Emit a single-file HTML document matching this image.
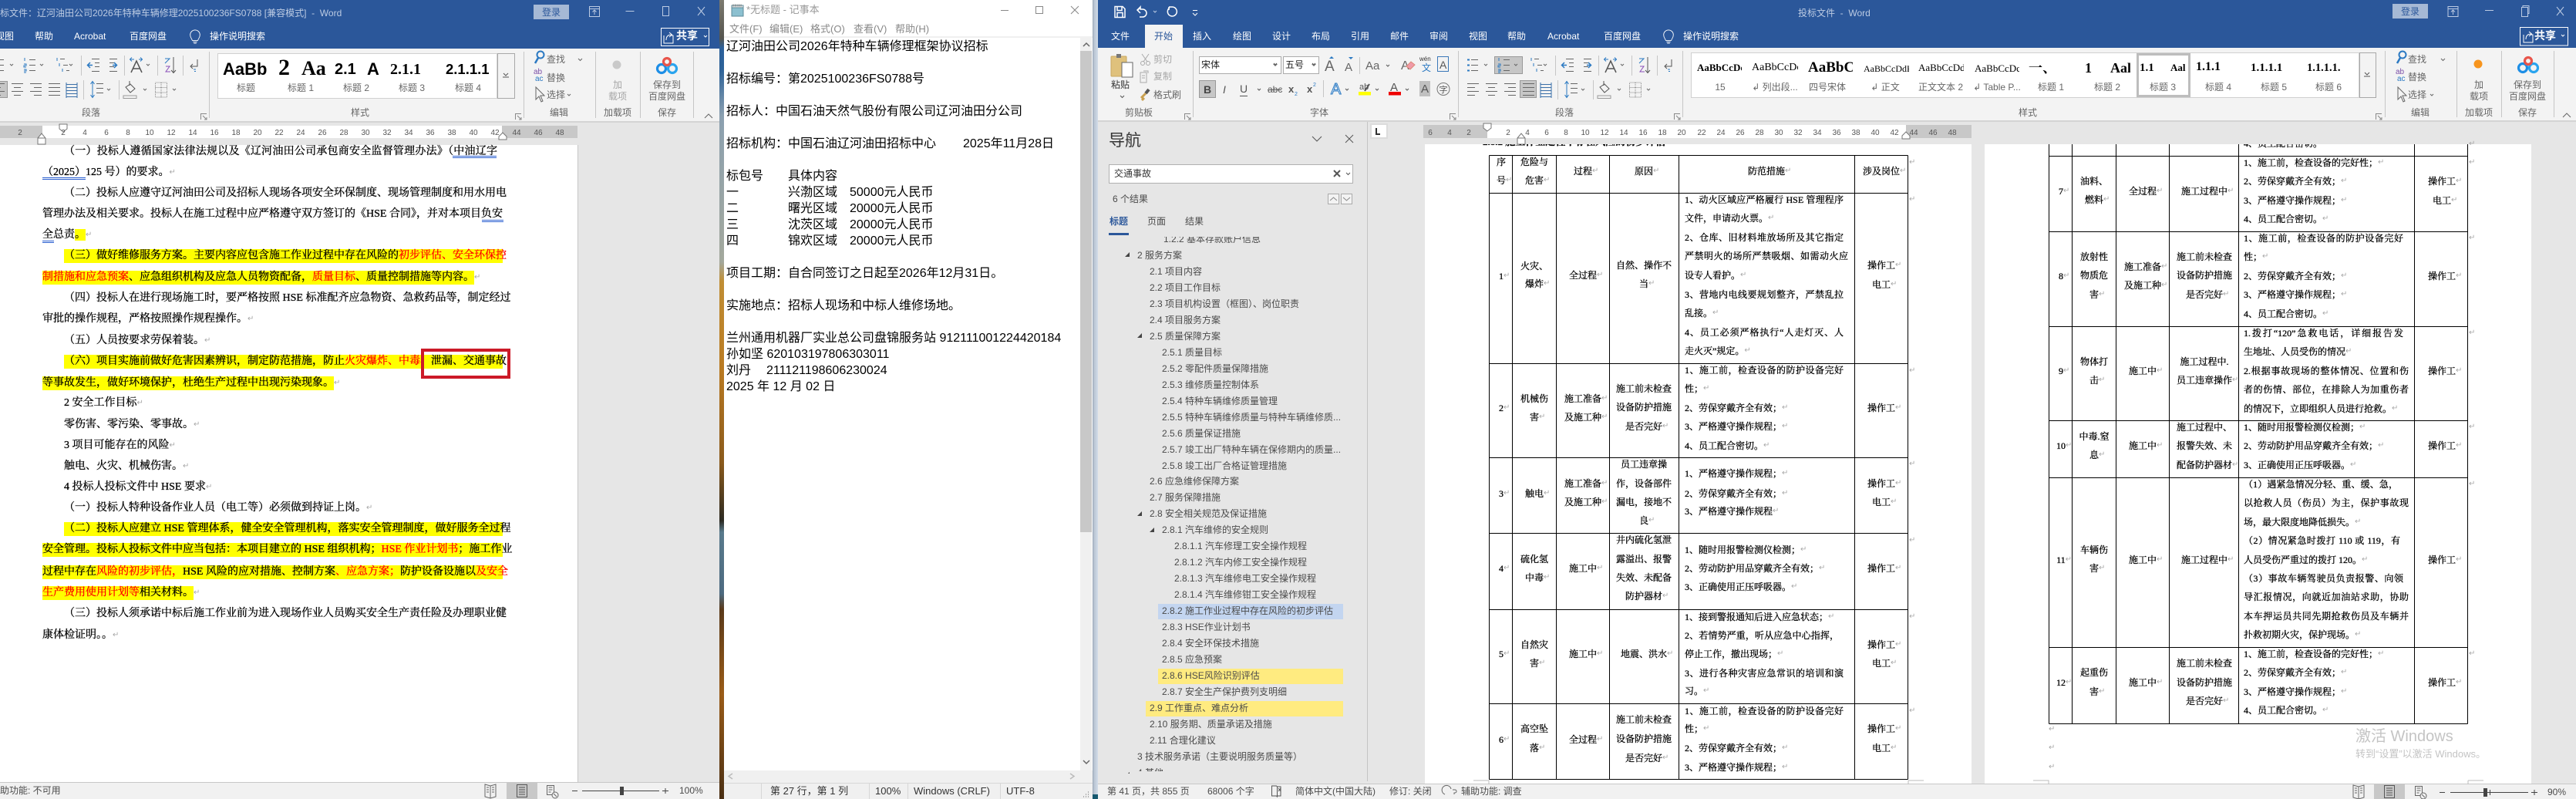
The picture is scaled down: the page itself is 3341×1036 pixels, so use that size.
<!DOCTYPE html>
<html lang="zh-CN"><head><meta charset="utf-8"><title>Word</title>
<style>
html,body{margin:0;padding:0;width:3341px;height:1036px;overflow:hidden;background:#e6e6e6}
body{position:relative;font-family:"Liberation Sans","Noto Sans CJK SC",sans-serif;font-size:12px;color:#444}
.b{position:absolute}
.t{position:absolute;white-space:pre;line-height:18px;height:18px}
.c{transform:translateX(-50%)}
.w{color:#fff}
.ti{color:#bccbe3}
.g{color:#666}
.lg{color:#a6a6a6}
.n{color:#4a4a4a}
.k{overflow:hidden}
.s{font-family:"Liberation Serif","Noto Serif CJK SC",serif;color:#000}
.sb{font-weight:bold}
.l{position:absolute;white-space:nowrap;line-height:18px;height:18px;font-size:14px;font-family:"Liberation Serif","Noto Serif CJK SC",serif;color:#000;-webkit-text-stroke:.3px}
.j{text-align:justify;text-align-last:justify}
.y{background:#ff0}
.r{color:#f00}
i{position:absolute;font-style:normal;font-family:"DejaVu Sans",sans-serif;color:#a8a8a8;font-size:10px;line-height:18px;-webkit-text-stroke:0}
.a{position:absolute;white-space:nowrap;line-height:18px;height:18px;font-size:12px;font-family:"Liberation Serif","Noto Serif CJK SC",serif;color:#000;-webkit-text-stroke:.3px}
.np{position:absolute;white-space:pre;line-height:21px;height:21px;font-size:16px;color:#000}
.ns{position:absolute;white-space:pre;line-height:18px;height:18px;font-size:13px;color:#333}
svg text{font-family:"Liberation Sans","Noto Sans CJK SC",sans-serif}
</style></head><body>

<!-- wallpaper strips -->
<div class="b" style="left:933px;top:0;width:6px;height:1036px;background:linear-gradient(#7c7a70 0,#55554f 50px,#2b5f9a 62px,#2d6298 90px,#8ba0b0 150px,#a3a89c 340px,#c08e34 365px,#b97a22 480px,#8a5a1c 600px,#2c2a22 675px,#597a8c 690px,#4d6a80 770px,#5a3a1a 790px,#9a5c18 900px,#4a2f14 1036px)"></div>
<div class="b" style="left:1417px;top:0;width:7px;height:1036px;background:linear-gradient(90deg,#9aa7b6 0,#b9c5d3 2px,#d2dce8 7px)"></div>
<div class="b" style="left:1417px;top:1030px;width:7px;height:6px;background:#16586f"></div>

<!-- LEFT WORD -->
<div class="b" style="left:0;top:0;width:933px;height:63px;background:#2b579a"></div>
<div class="b" style="left:0;top:63px;width:933px;height:94px;background:#f3f3f3"></div>
<div class="b" style="left:0;top:157px;width:933px;height:2px;background:#d4d4d4"></div>
<div class="b" style="left:0;top:159px;width:933px;height:29px;background:#e6e6e6"></div>
<div class="b" style="left:0;top:163px;width:55px;height:16px;background:#c8c8c8"></div>
<div class="b" style="left:55px;top:163px;width:596px;height:16px;background:#fff"></div>
<div class="b" style="left:651px;top:163px;width:98px;height:16px;background:#c8c8c8"></div>
<div class="b" style="left:0;top:188px;width:749px;height:826px;background:#fff"></div>
<div class="b" style="left:749px;top:188px;width:184px;height:826px;background:#e6e6e6;border-left:1px solid #c6c6c6;box-sizing:border-box"></div>
<div class="b" style="left:0;top:1014px;width:933px;height:22px;background:#f1f1f1;border-top:1px solid #c8c8c8;box-sizing:border-box"></div>
<div class="b" style="left:657px;top:1015px;width:40px;height:21px;background:#c8c8c8"></div>
<div class="b" style="left:692px;top:6px;width:46px;height:19px;background:#a6b9d5"></div>
<div class="b" style="left:0;top:105px;width:10px;height:22px;background:#c6c6c6;border:1px solid #999;border-left:0;box-sizing:border-box"></div>
<div class="b" style="left:282px;top:69px;width:363px;height:59px;background:#fff;border:1px solid #d0d0d0;box-sizing:border-box"></div>
<div class="b" style="left:645px;top:69px;width:23px;height:59px;background:#f3f3f3;border:1px solid #a8a8a8;box-sizing:border-box"></div>

<!-- NOTEPAD -->
<div class="b" style="left:939px;top:0;width:478px;height:1036px;background:#fff"></div>
<div class="b" style="left:939px;top:47px;width:478px;height:2px;background:#f0f0f0"></div>
<div class="b" style="left:1401px;top:49px;width:15px;height:950px;background:#f0f0f0"></div>
<div class="b" style="left:1401px;top:66px;width:15px;height:624px;background:#c8c8c8"></div>
<div class="b" style="left:939px;top:999px;width:478px;height:37px;background:#f0f0f0"></div>
<div class="b" style="left:939px;top:1015px;width:478px;height:1px;background:#d7d7d7"></div>
<div class="b" style="left:987px;top:1016px;width:1px;height:20px;background:#d7d7d7"></div>
<div class="b" style="left:1127px;top:1016px;width:1px;height:20px;background:#d7d7d7"></div>
<div class="b" style="left:1177px;top:1016px;width:1px;height:20px;background:#d7d7d7"></div>
<div class="b" style="left:1297px;top:1016px;width:1px;height:20px;background:#d7d7d7"></div>

<!-- RIGHT WORD -->
<div class="b" style="left:1424px;top:0;width:1917px;height:62px;background:#2b579a"></div>
<div class="b" style="left:1485px;top:32px;width:49px;height:30px;background:#f3f3f3"></div>
<div class="b" style="left:1424px;top:62px;width:1917px;height:94px;background:#f3f3f3"></div>
<div class="b" style="left:1424px;top:156px;width:1917px;height:2px;background:#d4d4d4"></div>
<div class="b" style="left:1424px;top:158px;width:1917px;height:859px;background:#e6e6e6"></div>
<div class="b" style="left:1773px;top:158px;width:1px;height:855px;background:#c4c4c4"></div>
<div class="b" style="left:1774px;top:158px;width:1567px;height:29px;background:#e6e6e6"></div>
<div class="b" style="left:1777px;top:160px;width:23px;height:20px;background:#fff;border:2px solid #dcdcdc;box-sizing:border-box"></div>
<div class="b" style="left:1846px;top:162px;width:83px;height:17px;background:#c8c8c8"></div>
<div class="b" style="left:1929px;top:162px;width:543px;height:17px;background:#fff"></div>
<div class="b" style="left:2472px;top:162px;width:85px;height:17px;background:#c8c8c8"></div>
<div class="b" style="left:1848px;top:187px;width:709px;height:830px;background:#fff"></div>
<div class="b" style="left:2574px;top:187px;width:709px;height:830px;background:#fff"></div>
<div class="b" style="left:1424px;top:1016px;width:1917px;height:20px;background:#f1f1f1;border-top:1px solid #c8c8c8;box-sizing:border-box"></div>
<div class="b" style="left:3079px;top:1017px;width:40px;height:19px;background:#c8c8c8"></div>
<div class="b" style="left:3103px;top:5px;width:46px;height:19px;background:#a6b9d5"></div>
<div class="b" style="left:1555px;top:73px;width:107px;height:23px;background:#fff;border:1px solid #ababab;box-sizing:border-box"></div>
<div class="b" style="left:1664px;top:73px;width:47px;height:23px;background:#fff;border:1px solid #ababab;box-sizing:border-box"></div>
<div class="b" style="left:1555px;top:104px;width:22px;height:23px;background:#c6c6c6;border:1px solid #999;box-sizing:border-box"></div>
<div class="b" style="left:1938px;top:73px;width:37px;height:23px;background:#c6c6c6;border:1px solid #999;box-sizing:border-box"></div>
<div class="b" style="left:1971px;top:104px;width:22px;height:23px;background:#c6c6c6;border:1px solid #999;box-sizing:border-box"></div>
<div class="b" style="left:2193px;top:68px;width:867px;height:59px;background:#fff;border:1px solid #d0d0d0;box-sizing:border-box"></div>
<div class="b" style="left:3060px;top:68px;width:22px;height:59px;background:#f3f3f3;border:1px solid #a8a8a8;box-sizing:border-box"></div>
<div class="b" style="left:2771px;top:69px;width:70px;height:57px;background:#fff;border:3px solid #bdbdbd;box-sizing:border-box"></div>
<div class="b" style="left:1438px;top:213px;width:317px;height:25px;background:#fff;border:1px solid #b0b0b0;box-sizing:border-box"></div>
<div class="b" style="left:1502px;top:783px;width:240px;height:20px;background:#c3d5f0"></div>
<div class="b" style="left:1502px;top:867px;width:240px;height:20px;background:#ffeb80"></div>
<div class="b" style="left:1486px;top:909px;width:256px;height:20px;background:#ffeb80"></div>

<!-- ICONS AND LINES -->
<svg class="b" style="left:0;top:0" width="3341" height="1036" viewBox="0 0 3341 1036" fill="none">
<defs>
<g id="para" stroke="#666" stroke-width="1">
 <path d="M8 77.5h9M8 84.5h9M8 91.5h9"/><path d="M3 77.5h3M3 84.5h3M3 91.5h3" stroke="#2b79c2" stroke-width="2"/><path d="M25 83l2 2 2-2"/>
 <path d="M50 77.5h8M50 84.5h8M50 91.5h8"/><path d="M44 75v4M43 83h3v2h-3v2h3M43 90h3v2h-3M43 94h3" stroke="#2b79c2"/><path d="M64 83l2 2 2-2"/>
 <path d="M90 76.5h6M94 84.5h6M98 91.5h4"/><path d="M86 75v4M89 82v4M93 89v4" stroke="#2b79c2"/><path d="M102 83l2 2 2-2"/>
 <path d="M117.5 72v26M173.5 72v26M216.5 72v26M249.5 72v26" stroke="#c6c6c6"/>
 <path d="M131 76.5h10M135 81.5h6M135 86.5h6M131 92.5h10"/><path d="M132 84.5h-6M129 81l-3.5 3.5 3.5 3.5" stroke="#2b79c2" stroke-width="1.5"/>
 <path d="M154 76.5h10M154 81.5h6M154 86.5h6M154 92.5h10"/><path d="M158 84.5h5M160 81l3.5 3.5-3.5 3.5" stroke="#2b79c2" stroke-width="1.5"/>
 <path d="M182 94l7-15 7 15M185 89h8" stroke="#555" stroke-width="1.5"/><path d="M181 77h5M183 74.5l-2.5 2.5 2.500 2.500M197 77h-5M194 74.5l2.5 2.5-2.5 2.5" stroke="#2b79c2"/><path d="M202 83l2 2 2-2"/>
 <path d="M226 76h6l-6 6" stroke="#2b79c2"/><path d="M227 86h5l-5 7h6" stroke="#8a4fb8"/><path d="M237 74v20M234 91l3 3.5 3-3.5" stroke="#555"/>
 <path d="M260 86h8v-9M262 83l-3 3 3 3" stroke="#555"/><path d="M263 90h3M264 92.5h2" stroke="#2b79c2"/>
 <path d="M3 108.5h15M3 113.5h10M3 118.5h15M3 123.5h10"/>
 <path d="M27 108.5h15M30 113.5h9M27 118.5h15M30 123.5h9"/>
 <path d="M51 108.5h15M56 113.5h10M51 118.5h15M56 123.5h10"/>
 <path d="M75 108.5h15M75 113.5h15M75 118.5h15M75 123.5h15"/>
 <path d="M98 109.5h14M98 113.5h14M98 117.5h14M98 121.5h14M98 125.5h14M98 107v20M112 107v20" stroke="#3a6fa8"/>
 <path d="M120.5 104v25M166.5 104v25" stroke="#c6c6c6"/>
 <path d="M137 108.5h9M137 114.5h9M137 120.5h9"/><path d="M132 106v20M129.5 109l2.5-3.5 2.5 3.5M129.5 123l2.5 3.5 2.5-3.5" stroke="#2b79c2"/><path d="M151 115l2 2 2-2"/>
 <path d="M180 105v6M175 113l6-4 6 6-6 5z" stroke="#555"/><rect x="172" y="124" width="17" height="3.5" stroke="#999"/><path d="M198 115l2 2 2-2"/>
 <path d="M213.5 107h15v19h-15zM213.5 113.5h15M213.5 120h15M221 107v19" stroke="#888" stroke-dasharray="1 1"/><path d="M236 115l2 2 2-2"/>
</g>
<g id="edit">
 <circle cx="3" cy="-4" r="4.5" stroke="#2b79c2" stroke-width="2"/><path d="M0 0l-4 7" stroke="#2b79c2" stroke-width="2.5"/>
 <text x="-6" y="21" font-size="10" fill="#7b4fa8">ab</text><text x="-4" y="30" font-size="10" fill="#2b79c2">ac</text>
 <path d="M-3 38l0 16 4-4 3 7 2-1-3-7 5 0z" stroke="#666"/>
</g>
<g id="baidu" stroke-width="3.2">
 <circle cx="-7" cy="4" r="5.5" stroke="#1d8ee6"/><circle cx="7" cy="4" r="5.5" stroke="#2aa4ee"/><circle cx="0" cy="-5" r="4.5" stroke="#e8544a"/>
</g>
<g id="share" stroke="#fff"><path d="M0 4v10h12V4h-3M3 10c0-5 3-7 7-7M7 0l3.5 3-3.5 3" stroke-width="1"/></g>
<g id="bulb" stroke="#fff" stroke-width="1"><path d="M-4 6c-1-3-3-4-3-8a7 7 0 0 1 14 0c0 4-2 5-3 8zM-3 8h6M-2 10h4" transform="scale(.9)"/></g>
<g id="launch" stroke="#888"><path d="M0 .5h8M.5 0v8M3 3l5 5M8 5v3h-3"/></g>
<g id="book" stroke="#666"><path d="M0 0l7 2 7-2v16l-7 2-7-2zM7 2v16M2 4h3M2 7h3M2 10h3M9 4h3M9 7h3M9 10h3"/></g>
<g id="print" stroke="#555"><path d="M.5.5h13v16H.5zM3 4h8M3 7h8M3 10h8M3 13h8"/></g>
<g id="web" stroke="#666"><path d="M.5.5h9v12h-9zM2.5 3h5M2.5 6h5M2.5 9h3"/><circle cx="11" cy="13" r="4" stroke="#666" fill="#f1f1f1"/><path d="M9 11l4 4"/></g>
</defs>

<g stroke="#bccbe3" stroke-width="1">
<path d="M764.5 8.5h13v13h-13zM764.5 11.5h13M771 19v-6M768.5 15.5l2.5-2.5 2.5 2.5"/>
<path d="M811.5 14.5h11"/>
<rect x="859.5" y="8.5" width="8" height="12"/>
<path d="M905 9l9 11M914 9l-9 11"/>
<rect x="857.5" y="36.5" width="62" height="23" stroke="#fff"/>
<path d="M913 46l2 2 2-2" stroke="#fff"/>
</g>
<use href="#share" x="861" y="42"/><use href="#bulb" x="253" y="47"/>

<use href="#para" x="-12" y="0"/>
<g stroke="#c6c6c6"><path d="M271.5 67v86M679.5 67v86M772.5 67v86M830.5 67v86M899.5 67v86"/></g>
<use href="#launch" x="260" y="147"/><use href="#launch" x="668" y="147"/>
<path d="M653 95l3 3 3-3M652 100h8" stroke="#555"/>
<use href="#edit" x="698" y="75"/>
<path d="M750 76l2.5 2.5 2.5-2.5M736 122l2 2 2-2" stroke="#666"/>
<circle cx="800" cy="84" r="5.5" fill="#c9c9c9"/>
<use href="#baidu" x="865" y="85"/>
<path d="M914 153l5-5 5 5" stroke="#666"/>
<path d="M77 161h10v6l-5 4-5-4zM49 179l5-6 5 6v8H49zM49 179h10M647 181v-4l5-5 5 5v4z" fill="#fff" stroke="#777"/>
<g fill="#555" font-size="10" text-anchor="middle">
<text x="26" y="175">2</text><text x="82" y="175">2</text><text x="110" y="175">4</text><text x="138" y="175">6</text><text x="166" y="175">8</text><text x="194" y="175">10</text><text x="222" y="175">12</text><text x="250" y="175">14</text><text x="278" y="175">16</text><text x="306" y="175">18</text><text x="334" y="175">20</text><text x="362" y="175">22</text><text x="390" y="175">24</text><text x="418" y="175">26</text><text x="446" y="175">28</text><text x="474" y="175">30</text><text x="502" y="175">32</text><text x="530" y="175">34</text><text x="558" y="175">36</text><text x="586" y="175">38</text><text x="614" y="175">40</text><text x="642" y="175">42</text><text x="670" y="175">44</text><text x="698" y="175">46</text><text x="726" y="175">48</text>
</g>
<g stroke="#2b5fd0"><path d="M587 202.5h57M587 204.5h57M55 230.5h56M55 232.5h56M625 285.5h28M625 287.5h28M55 312.5h15M55 314.5h15"/></g>
<use href="#book" x="629" y="1017"/><use href="#print" x="670" y="1017"/><use href="#web" x="709" y="1018"/>
<path d="M742 1025.5h7M755 1025.5h100M859 1025.5h8M863 1022v7" stroke="#444"/><rect x="804" y="1020" width="5" height="11" fill="#444"/>

<path d="M949 7h15v14h-15z" fill="#8cc0d0" stroke="#5d8a99"/><path d="M949 7h15v3h-15z" fill="#e8e8e8" stroke="#5d8a99"/><path d="M951 5.5v3M953.5 5.5v3M956 5.5v3M958.5 5.5v3M961 5.5v3" stroke="#777"/>
<path d="M1298 13.5h10" stroke="#888"/><rect x="1343.5" y="8.5" width="9" height="9" stroke="#888"/><path d="M1389 8l10 10M1399 8l-10 10" stroke="#888"/>
<path d="M1405 60l4-4 4 4M1405 986l4 4 4-4" stroke="#666" stroke-width="1.5"/>
<path d="M950 1010l-5-3.500 5-3.500M1388 1003l5 3.500-5 3.500" stroke="#bbb" stroke-width="1.5"/>
<path d="M1411 1033h1M1408 1033h1M1411 1030h1M1405 1033h1M1408 1030h1M1411 1027h1" stroke="#aaa" stroke-width="2"/>

<g stroke="#fff" stroke-width="1.5">
<path d="M1446 8.5h10l3 3v11h-13zM1449 8.5v5h6v-5M1449 22.5v-6h7v6"/>
<path d="M1475 14l4-5v3h3a5 5 0 0 1 0 10h-4M1479 9l-4 4 4 4"/>
<path d="M1516 9h4a6 6 0 1 1-3 1M1516 9v4"/>
<path d="M1547 13.5h6M1547 17l3 3 3-3" stroke-width="1"/>
</g>
<path d="M1496 14l2 2 2-2" stroke="#bccbe3"/>
<g stroke="#bccbe3" stroke-width="1">
<path d="M3175 8.5h13v13h-13zM3175 11.5h13M3181.5 19v-6M3179 15.5l2.5-2.5 2.5 2.5"/>
<path d="M3223 13.5h11"/>
<path d="M3270.5 9.5h8v12h-8zM3272 9V7.5h8v10h-1"/>
<path d="M3316 9l9 11M3325 9l-9 11"/>
<rect x="3268.5" y="35.5" width="62" height="23.5" stroke="#fff"/>
<path d="M3322 45l2 2 2-2" stroke="#fff"/>
</g>
<use href="#share" x="3273" y="41"/><use href="#bulb" x="2164" y="47"/>

<rect x="1441" y="73" width="20" height="26" rx="1" fill="#dfc17c" stroke="#c8a860"/><rect x="1448" y="70" width="6" height="5" fill="#777"/><rect x="1455" y="81" width="14" height="19" fill="#fff" stroke="#666"/>
<path d="M1453 124l2.5 2.5 2.5-2.5" stroke="#555"/>
<g stroke="#aaa"><circle cx="1482" cy="82" r="2.5"/><circle cx="1489" cy="82" r="2.5"/><path d="M1481 70l7 10M1490 70l-7 10"/><path d="M1479 94h8v13h-8zM1483 92h6v3M1481 98h4M1481 101h4"/></g>
<path d="M1480 127l6-6M1481 130l3-3" stroke="#c9a050" stroke-width="3"/><path d="M1486 121l4-5" stroke="#555" stroke-width="4"/>
<use href="#launch" x="1536" y="147"/><use href="#launch" x="1880" y="147"/><use href="#launch" x="2171" y="147"/><use href="#launch" x="3081" y="147"/>
<g stroke="#c6c6c6"><path d="M1547.5 66v86M1891.5 66v86M2182.5 66v86M3093.5 66v86M3186.5 66v86M3244.5 66v86M3312.5 66v86M1763.5 74v22M1716.5 104v22"/></g>
<path d="M1652 82l2 2 2-2M1702 82l2 2 2-2M1798 84l2 2 2-2M1631 115l2 2 2-2M1745 115l2 2 2-2M1784 115l2 2 2-2M1823 115l2 2 2-2" stroke="#555"/>
<path d="M1724 76l3-3 3 3" fill="#2b79c2"/><path d="M1749 74l3 3 3-3" fill="#2b79c2"/>
<g font-size="19" fill="#666"><text x="1718" y="92">A</text></g><g font-size="15" fill="#666"><text x="1744" y="92">A</text></g>
<text x="1771" y="90" font-size="15" fill="#666">Aa</text>
<text x="1817" y="90" font-size="16" fill="#666">A</text><path d="M1824 86l6-6 5 4-6 6z" fill="#f09aa8" stroke="#d87"/>
<text x="1841" y="79" font-size="8" fill="#333">wén</text><text x="1844" y="92" font-size="12" fill="#2b79c2">文</text>
<rect x="1864.5" y="73.5" width="14" height="19" stroke="#3a78b8"/><text x="1867" y="89" font-size="14" fill="#555">A</text>
<text x="1561" y="121" font-size="14" font-weight="bold" fill="#444">B</text>
<text x="1586" y="121" font-size="14" font-style="italic" fill="#555" font-family="Liberation Serif">I</text>
<text x="1608" y="120" font-size="14" fill="#555">U</text><path d="M1608 124.5h10" stroke="#555"/>
<text x="1644" y="120" font-size="12" fill="#555">abc</text><path d="M1644 116.5h18" stroke="#555"/>
<text x="1671" y="120" font-size="13" font-weight="bold" fill="#555">x</text><text x="1679" y="124" font-size="7" fill="#2b79c2">2</text>
<text x="1695" y="120" font-size="13" font-weight="bold" fill="#555">x</text><text x="1703" y="112" font-size="7" fill="#2b79c2">2</text>
<text x="1726" y="122" font-size="20" fill="#dbe9f7" stroke="#2b79c2" stroke-width="1">A</text>
<text x="1763" y="116" font-size="11" fill="#555">ab</text><path d="M1770 118l6-9" stroke="#555" stroke-width="2"/><rect x="1762" y="119" width="16" height="4.5" fill="#ff0"/>
<text x="1803" y="118" font-size="15" fill="#555">A</text><rect x="1801" y="119" width="16" height="4.5" fill="#e00"/>
<rect x="1841" y="105" width="14" height="20" fill="#c0c0c0"/><text x="1843" y="120" font-size="15" fill="#555">A</text>
<circle cx="1872" cy="115.5" r="8" stroke="#777"/><text x="1866.5" y="120" font-size="11" fill="#555">字</text>
<use href="#para" x="1900" y="0"/>
<path d="M3067 94l3 3 3-3M3066 99h8" stroke="#555"/>
<use href="#edit" x="3113" y="75"/>
<path d="M3166 76l2.5 2.5 2.5-2.5M3152 122l2 2 2-2" stroke="#666"/>
<circle cx="3214" cy="83" r="5.5" fill="#f7941d"/>
<use href="#baidu" x="3279" y="84"/>
<path d="M3324 152l5-5 5 5" stroke="#666"/>
<path d="M1785 166v8h5" stroke="#333" stroke-width="2"/>
<path d="M1924 160h10v6l-5 4-5-4zM1968 179l5-6 5 6v8h-10zM1968 179h10M2467 180v-4l5-5 5 5v4z" fill="#fff" stroke="#777"/>
<g fill="#555" font-size="10" text-anchor="middle">
<text x="1855" y="175">6</text><text x="1880" y="175">4</text><text x="1905" y="175">2</text><text x="1956" y="175">2</text><text x="1981" y="175">4</text><text x="2006" y="175">6</text><text x="2031" y="175">8</text><text x="2056" y="175">10</text><text x="2081" y="175">12</text><text x="2106" y="175">14</text><text x="2131" y="175">16</text><text x="2156" y="175">18</text><text x="2181" y="175">20</text><text x="2207" y="175">22</text><text x="2232" y="175">24</text><text x="2257" y="175">26</text><text x="2282" y="175">28</text><text x="2307" y="175">30</text><text x="2332" y="175">32</text><text x="2357" y="175">34</text><text x="2382" y="175">36</text><text x="2407" y="175">38</text><text x="2432" y="175">40</text><text x="2457" y="175">42</text><text x="2482" y="175">44</text><text x="2507" y="175">46</text><text x="2532" y="175">48</text>
</g>
<path d="M1702 177l6 6 6-6M1745 175l10 10M1755 175l-10 10" stroke="#555"/>
<path d="M1730 221l8 8M1738 221l-8 8" stroke="#555" stroke-width="2"/><path d="M1746 224l2.5 2.5 2.5-2.5" stroke="#555"/>
<rect x="1722.5" y="251.5" width="14" height="13" stroke="#aaa" fill="#f3f3f3"/><rect x="1739.5" y="251.5" width="14" height="13" stroke="#aaa" fill="#f3f3f3"/>
<path d="M1725 260l4.5-4 4.5 4M1742 256l4.5 4 4.5-4" stroke="#888"/>
<rect x="1438" y="302" width="26" height="3" fill="#2b579a"/>
<path d="M1465 327v6h-6zM1481 432v6h-6zM1481 663v6h-6zM1497 684v6h-6z" fill="#444"/>
<path d="M1465 1001v2h-2z" fill="#444"/>
<path d="M1649.5 1019h6l1 1v13l-1-1h-6zM1656 1020h5v12h-5M1658 1022l3 4M1661 1022l-3 4" stroke="#555"/>
<path d="M1874 1030a6 6 0 1 1 8-7M1884 1024h3a2 2 0 0 1 0 4h-1v2" stroke="#666"/>
<use href="#book" x="3052" y="1018"/><use href="#print" x="3092" y="1018"/><use href="#web" x="3132" y="1019"/>
<path d="M3164 1027.5h7M3178 1027.5h101M3283 1027.5h8M3287 1024v7" stroke="#444"/><rect x="3221" y="1022" width="5" height="11" fill="#444"/><path d="M3229.5 1024v7" stroke="#444"/>

<g stroke="#000" stroke-width="1">
<path d="M1931.5 201.5h543M1931.5 250.5h543M1931.5 471.5h543M1931.5 593.5h543M1931.5 691.5h543M1931.5 790.5h543M1931.5 912.5h543M1931.5 1010.5h543"/>
<path d="M1931.5 201.5v809M1961.5 201.5v809M2018.5 201.5v809M2087.5 201.5v809M2177.5 201.5v809M2405.5 201.5v809M2474.5 201.5v809"/>
</g>
<path d="M1911 1012h20v5M2475 1012h20M2475 1012v5" stroke="#bbb"/>
<g stroke="#000" stroke-width="1">
<path d="M2657.5 202.5h543M2657.5 300.5h543M2657.5 423.5h543M2657.5 545.5h543M2657.5 619.5h543M2657.5 839.5h543M2657.5 938.5h543"/>
<path d="M2657.5 187v751.5M2687.5 187v751.5M2744.5 187v751.5M2813.5 187v751.5M2903.5 187v751.5M3131.5 187v751.5M3200.5 187v751.5"/>
</g>
<path d="M2637 1012h20v5M3201 1012h20M3201 1012v5" stroke="#bbb"/>
</svg>

<!-- LEFT WORD TEXT -->
<div class="t ti" style="left:0;top:8px">标文件：辽河油田公司2026年特种车辆修理2025100236FS0788 [兼容模式]  -  Word</div>
<div class="t c" style="left:715px;top:7px;color:#2b579a;font-size:12px">登录</div>
<div class="t w" style="left:45px;top:38px">帮助</div>
<div class="t w" style="left:96px;top:38px">Acrobat</div>
<div class="t w" style="left:168px;top:38px">百度网盘</div>
<div class="t w" style="left:272px;top:38px">操作说明搜索</div>
<div class="t w" style="left:0;top:38px;width:18px;overflow:hidden;direction:rtl">视图</div>
<div class="t w" style="left:877px;top:37px;font-size:14px;font-weight:bold">共享</div>
<div class="t c g" style="left:118px;top:137px">段落</div>
<div class="t c g" style="left:467px;top:137px">样式</div>
<div class="t c g" style="left:725px;top:137px">编辑</div>
<div class="t c g" style="left:801px;top:137px">加载项</div>
<div class="t c g" style="left:865px;top:137px">保存</div>
<div class="t c lg" style="left:801px;top:101px">加</div>
<div class="t c lg" style="left:801px;top:116px">载项</div>
<div class="t c g" style="left:865px;top:101px">保存到</div>
<div class="t c g" style="left:865px;top:116px">百度网盘</div>
<div class="t g" style="left:709px;top:68px">查找</div>
<div class="t g" style="left:709px;top:92px">替换</div>
<div class="t g" style="left:709px;top:114px">选择</div>
<div class="t k" style="left:289px;top:79px;width:58px;color:#000;font:bold 22px/22px 'Liberation Sans',sans-serif;height:24px">AaBb(</div>
<div class="t s sb" style="left:361px;top:70px;font-size:30px;line-height:36px;height:36px">2</div>
<div class="t s sb" style="left:391px;top:73px;font-size:26px;line-height:32px;height:32px">Aa</div>
<div class="t sb" style="left:434px;top:78px;color:#000;font-size:20px;line-height:24px;height:24px">2.1</div>
<div class="t sb k" style="left:476px;top:78px;width:17px;color:#000;font-size:22px;line-height:24px;height:24px">A</div>
<div class="t s sb" style="left:506px;top:78px;font-size:20px;line-height:24px;height:24px">2.1.1</div>
<div class="t sb" style="left:578px;top:79px;color:#000;font-size:18.5px;line-height:22px;height:22px">2.1.1.1</div>
<div class="t c g" style="left:319px;top:105px">标题</div>
<div class="t c g" style="left:390px;top:105px">标题 1</div>
<div class="t c g" style="left:462px;top:105px">标题 2</div>
<div class="t c g" style="left:534px;top:105px">标题 3</div>
<div class="t c g" style="left:607px;top:105px">标题 4</div>
<div class="t n" style="left:0;top:1016px">助功能: 不可用</div>
<div class="t n" style="left:881px;top:1016px">100%</div>

<!-- LEFT DOC -->
<div class="l j" style="left:83px;top:188px;width:562px">（一）投标人遵循国家法律法规以及《辽河油田公司承包商安全监督管理办法》（中油辽字</div>
<div class="l" style="left:55px;top:215px">（2025）125 号）的要求。<i>↵</i></div>
<div class="l j" style="left:83px;top:242px;width:569px">（二）投标人应遵守辽河油田公司及招标人现场各项安全环保制度、现场管理制度和用水用电</div>
<div class="l j" style="left:55px;top:269px;width:597px">管理办法及相关要求。投标人在施工过程中应严格遵守双方签订的《HSE 合同》，并对本项目负安</div>
<div class="l" style="left:55px;top:296px">全总责<span class="y">。</span><i>↵</i></div>
<div class="l j y" style="left:83px;top:323px;width:569px">（三）做好维修服务方案。主要内容应包含施工作业过程中存在风险的<span class="r">初步评估、安全环保控</span></div>
<div class="l y" style="left:55px;top:351px"><span class="r">制措施和应急预案</span>、应急组织机构及应急人员物资配备，<span class="r">质量目标</span>、质量控制措施等内容。<i>↵</i></div>
<div class="l j" style="left:83px;top:378px;width:569px">（四）投标人在进行现场施工时，要严格按照 HSE 标准配齐应急物资、急救药品等，制定经过</div>
<div class="l" style="left:55px;top:405px">审批的操作规程，严格按照操作规程操作。<i>↵</i></div>
<div class="l" style="left:83px;top:433px">（五）人员按要求劳保着装。<i>↵</i></div>
<div class="l j y" style="left:83px;top:460px;width:569px">（六）项目实施前做好危害因素辨识，制定防范措施，防止<span class="r">火灾爆炸、中毒、</span>泄漏、交通事故</div>
<div class="l y" style="left:55px;top:488px">等事故发生，做好环境保护，杜绝生产过程中出现污染现象。<i>↵</i></div>
<div class="l" style="left:83px;top:514px">2 安全工作目标<i>↵</i></div>
<div class="l" style="left:83px;top:542px">零伤害、零污染、零事故。<i>↵</i></div>
<div class="l" style="left:83px;top:569px">3 项目可能存在的风险<i>↵</i></div>
<div class="l" style="left:83px;top:596px">触电、火灾、机械伤害。<i>↵</i></div>
<div class="l" style="left:83px;top:623px">4 投标人投标文件中 HSE 要求 <i>↵</i></div>
<div class="l" style="left:83px;top:650px">（一）投标人特种设备作业人员（电工等）必须做到持证上岗。<i>↵</i></div>
<div class="l j y" style="left:83px;top:677px;width:569px">（二）投标人应建立 HSE 管理体系，健全安全管理机构，落实安全管理制度，做好服务全过程</div>
<div class="l j y" style="left:55px;top:704px;width:597px">安全管理。投标人投标文件中应当包括：本项目建立的 HSE 组织机构；<span class="r">HSE 作业计划书</span>；施工作业</div>
<div class="l j y" style="left:55px;top:733px;width:597px">过程中存在<span class="r">风险的初步评估，</span>HSE 风险的应对措施、控制方案<span class="r">、应急方案；</span>防护设备设施以<span class="r">及安全</span></div>
<div class="l y" style="left:55px;top:760px"><span class="r">生产费用使用计划等</span>相关材料。<i>↵</i></div>
<div class="l j" style="left:83px;top:787px;width:569px">（三）投标人须承诺中标后施工作业前为进入现场作业人员购买安全生产责任险及办理职业健</div>
<div class="l" style="left:55px;top:815px">康体检证明。。<i>↵</i></div>
<div class="b" style="left:546px;top:452px;width:116px;height:39px;border:4px solid #cc1a28;box-sizing:border-box"></div>

<!-- NOTEPAD TEXT -->
<div class="t" style="left:968px;top:4px;font-size:13px;color:#999">*无标题 - 记事本</div>
<div class="t" style="left:946px;top:29px;font-size:13px;color:#888">文件(F)</div>
<div class="t" style="left:998px;top:29px;font-size:13px;color:#888">编辑(E)</div>
<div class="t" style="left:1051px;top:29px;font-size:13px;color:#888">格式(O)</div>
<div class="t" style="left:1107px;top:29px;font-size:13px;color:#888">查看(V)</div>
<div class="t" style="left:1161px;top:29px;font-size:13px;color:#888">帮助(H)</div>
<div class="np" style="left:942px;top:50px">辽河油田公司2026年特种车辆修理框架协议招标</div>
<div class="np" style="left:942px;top:92px">招标编号：第2025100236FS0788号</div>
<div class="np" style="left:942px;top:134px">招标人：中国石油天然气股份有限公司辽河油田分公司</div>
<div class="np" style="left:942px;top:176px">招标机构：中国石油辽河油田招标中心</div>
<div class="np" style="left:1249px;top:176px">2025年11月28日</div>
<div class="np" style="left:942px;top:218px">标包号</div><div class="np" style="left:1022px;top:218px">具体内容</div>
<div class="np" style="left:942px;top:239px">一</div><div class="np" style="left:1022px;top:239px">兴渤区域</div><div class="np" style="left:1102px;top:239px">50000元人民币</div>
<div class="np" style="left:942px;top:260px">二</div><div class="np" style="left:1022px;top:260px">曙光区域</div><div class="np" style="left:1102px;top:260px">20000元人民币</div>
<div class="np" style="left:942px;top:281px">三</div><div class="np" style="left:1022px;top:281px">沈茨区域</div><div class="np" style="left:1102px;top:281px">20000元人民币</div>
<div class="np" style="left:942px;top:302px">四</div><div class="np" style="left:1022px;top:302px">锦欢区域</div><div class="np" style="left:1102px;top:302px">20000元人民币</div>
<div class="np" style="left:942px;top:344px">项目工期：自合同签订之日起至2026年12月31日。</div>
<div class="np" style="left:942px;top:386px">实施地点：招标人现场和中标人维修场地。</div>
<div class="np" style="left:942px;top:428px">兰州通用机器厂实业总公司盘锦服务站 912111001224420184</div>
<div class="np" style="left:942px;top:449px">孙如坚 620103197806303011</div>
<div class="np" style="left:942px;top:470px">刘丹</div><div class="np" style="left:994px;top:470px">211121198606230024</div>
<div class="np" style="left:942px;top:491px">2025 年 12 月 02 日</div>
<div class="ns" style="left:999px;top:1017px">第 27 行，第 1 列</div>
<div class="ns" style="left:1135px;top:1017px">100%</div>
<div class="ns" style="left:1185px;top:1017px">Windows (CRLF)</div>
<div class="ns" style="left:1305px;top:1017px">UTF-8</div>

<!-- RIGHT WORD TEXT -->
<div class="t ti" style="left:2332px;top:8px">投标文件  -  Word</div>
<div class="t c" style="left:3126px;top:6px;color:#2b579a">登录</div>
<div class="t w" style="left:1441px;top:38px">文件</div>
<div class="t" style="left:1497px;top:38px;color:#2b579a">开始</div>
<div class="t w" style="left:1547px;top:38px">插入</div>
<div class="t w" style="left:1599px;top:38px">绘图</div>
<div class="t w" style="left:1650px;top:38px">设计</div>
<div class="t w" style="left:1701px;top:38px">布局</div>
<div class="t w" style="left:1752px;top:38px">引用</div>
<div class="t w" style="left:1803px;top:38px">邮件</div>
<div class="t w" style="left:1854px;top:38px">审阅</div>
<div class="t w" style="left:1905px;top:38px">视图</div>
<div class="t w" style="left:1955px;top:38px">帮助</div>
<div class="t w" style="left:2007px;top:38px">Acrobat</div>
<div class="t w" style="left:2080px;top:38px">百度网盘</div>
<div class="t w" style="left:2183px;top:38px">操作说明搜索</div>
<div class="t w" style="left:3287px;top:37px;font-size:14px;font-weight:bold">共享</div>
<div class="t" style="left:1441px;top:101px;color:#333">粘贴</div>
<div class="t lg" style="left:1496px;top:68px">剪切</div>
<div class="t lg" style="left:1496px;top:90px">复制</div>
<div class="t g" style="left:1496px;top:114px">格式刷</div>
<div class="t c g" style="left:1477px;top:137px">剪贴板</div>
<div class="t c g" style="left:1711px;top:137px">字体</div>
<div class="t c g" style="left:2029px;top:137px">段落</div>
<div class="t c g" style="left:2630px;top:137px">样式</div>
<div class="t c g" style="left:3139px;top:137px">编辑</div>
<div class="t c g" style="left:3215px;top:137px">加载项</div>
<div class="t c g" style="left:3278px;top:137px">保存</div>
<div class="t" style="left:1558px;top:75px;color:#222">宋体</div>
<div class="t" style="left:1667px;top:75px;color:#222">五号</div>
<svg class="b" style="left:1650px;top:82px" width="10" height="6"><path d="M1 1h6l-3 3z" fill="#666"/></svg>
<svg class="b" style="left:1700px;top:82px" width="10" height="6"><path d="M1 1h6l-3 3z" fill="#666"/></svg>
<div class="t g" style="left:3123px;top:68px">查找</div>
<div class="t g" style="left:3123px;top:91px">替换</div>
<div class="t g" style="left:3123px;top:114px">选择</div>
<div class="t c g" style="left:3215px;top:101px">加</div>
<div class="t c g" style="left:3215px;top:116px">载项</div>
<div class="t c g" style="left:3278px;top:101px">保存到</div>
<div class="t c g" style="left:3278px;top:116px">百度网盘</div>
<div class="t s sb k" style="left:2201px;top:79px;width:58px;font-size:13px">AaBbCcDc</div>
<div class="t s k" style="left:2272px;top:79px;width:60px;font-size:14px">AaBbCcDc</div>
<div class="t s sb k" style="left:2345px;top:76px;width:58px;font-size:19px;line-height:24px;height:24px">AaBbCc</div>
<div class="t s k" style="left:2417px;top:80px;width:59px;font-size:12px">AaBbCcDdE</div>
<div class="t s k" style="left:2488px;top:79px;width:59px;font-size:13px">AaBbCcDd</div>
<div class="t s k" style="left:2561px;top:80px;width:58px;font-size:13px">AaBbCcDc</div>
<div class="t s sb" style="left:2631px;top:76px;font-size:18px;line-height:24px;height:24px">一、</div>
<div class="t s sb" style="left:2704px;top:76px;font-size:18px;line-height:24px;height:24px">1</div>
<div class="t s sb k" style="left:2737px;top:76px;width:26px;font-size:18px;line-height:24px;height:24px">Aal</div>
<div class="t s sb" style="left:2775px;top:78px;font-size:15px;line-height:20px;height:20px">1.1</div>
<div class="t s sb k" style="left:2815px;top:79px;width:21px;font-size:13px">Aal</div>
<div class="t s sb" style="left:2848px;top:77px;font-size:16px;line-height:20px;height:20px">1.1.1</div>
<div class="t s sb" style="left:2919px;top:78px;font-size:15px;line-height:20px;height:20px">1.1.1.1</div>
<div class="t s sb" style="left:2992px;top:78px;font-size:14.5px;line-height:20px;height:20px">1.1.1.1.</div>
<div class="t c g" style="left:2231px;top:104px">15</div>
<div class="t c g" style="left:2302px;top:104px">↲ 列出段...</div>
<div class="t c g" style="left:2370px;top:104px">四号宋体</div>
<div class="t c g" style="left:2445px;top:104px">↲ 正文</div>
<div class="t c g" style="left:2517px;top:104px">正文文本 2</div>
<div class="t c g" style="left:2590px;top:104px">↲ Table P...</div>
<div class="t c g" style="left:2660px;top:104px">标题 1</div>
<div class="t c g" style="left:2733px;top:104px">标题 2</div>
<div class="t c g" style="left:2805px;top:104px">标题 3</div>
<div class="t c g" style="left:2877px;top:104px">标题 4</div>
<div class="t c g" style="left:2949px;top:104px">标题 5</div>
<div class="t c g" style="left:3020px;top:104px">标题 6</div>

<!-- NAV -->
<div class="t" style="left:1438px;top:170px;font-size:21px;line-height:26px;height:26px;color:#333">导航</div>
<div class="t" style="left:1445px;top:216px;color:#333">交通事故</div>
<div class="t n" style="left:1443px;top:249px">6 个结果</div>
<div class="t sb" style="left:1439px;top:278px;color:#2b579a;font-weight:bold">标题</div>
<div class="t n" style="left:1488px;top:278px">页面</div>
<div class="t n" style="left:1537px;top:278px">结果</div>
<div class="b k" style="left:1509px;top:307px;width:220px;height:8px;overflow:hidden"><div class="t n" style="left:0;top:-6px">1.2.2 基本存款账户信息</div></div>
<div class="t n" style="left:1475px;top:322px">2 服务方案</div>
<div class="t n" style="left:1491px;top:343px">2.1 项目内容</div>
<div class="t n" style="left:1491px;top:364px">2.2 项目工作目标</div>
<div class="t n" style="left:1491px;top:385px">2.3 项目机构设置（框图）、岗位职责</div>
<div class="t n" style="left:1491px;top:406px">2.4 项目服务方案</div>
<div class="t n" style="left:1491px;top:427px">2.5 质量保障方案</div>
<div class="t n" style="left:1507px;top:448px">2.5.1 质量目标</div>
<div class="t n" style="left:1507px;top:469px">2.5.2 零配件质量保障措施</div>
<div class="t n" style="left:1507px;top:490px">2.5.3 维修质量控制体系</div>
<div class="t n" style="left:1507px;top:511px">2.5.4 特种车辆维修质量管理</div>
<div class="t n" style="left:1507px;top:532px">2.5.5 特种车辆维修质量与特种车辆维修质...</div>
<div class="t n" style="left:1507px;top:553px">2.5.6 质量保证措施</div>
<div class="t n" style="left:1507px;top:574px">2.5.7 竣工出厂特种车辆在保修期内的质量...</div>
<div class="t n" style="left:1507px;top:595px">2.5.8 竣工出厂合格证管理措施</div>
<div class="t n" style="left:1491px;top:615px">2.6 应急维修保障方案</div>
<div class="t n" style="left:1491px;top:636px">2.7 服务保障措施</div>
<div class="t n" style="left:1491px;top:657px">2.8 安全相关规范及保证措施</div>
<div class="t n" style="left:1507px;top:678px">2.8.1 汽车维修的安全规则</div>
<div class="t n" style="left:1523px;top:699px">2.8.1.1 汽车修理工安全操作规程</div>
<div class="t n" style="left:1523px;top:720px">2.8.1.2 汽车内修工安全操作规程</div>
<div class="t n" style="left:1523px;top:741px">2.8.1.3 汽车维修电工安全操作规程</div>
<div class="t n" style="left:1523px;top:762px">2.8.1.4 汽车维修钳工安全操作规程</div>
<div class="t n" style="left:1507px;top:783px">2.8.2 施工作业过程中存在风险的初步评估</div>
<div class="t n" style="left:1507px;top:804px">2.8.3 HSE作业计划书</div>
<div class="t n" style="left:1507px;top:825px">2.8.4 安全环保技术措施</div>
<div class="t n" style="left:1507px;top:846px">2.8.5 应急预案</div>
<div class="t n" style="left:1507px;top:867px">2.8.6 HSE风险识别评估</div>
<div class="t n" style="left:1507px;top:888px">2.8.7 安全生产保护费列支明细</div>
<div class="t n" style="left:1491px;top:909px">2.9 工作重点、难点分析</div>
<div class="t n" style="left:1491px;top:930px">2.10 服务期、质量承诺及措施</div>
<div class="t n" style="left:1491px;top:951px">2.11 合理化建议</div>
<div class="t n" style="left:1475px;top:972px">3 技术服务承诺（主要说明服务质量等）</div>
<div class="b" style="left:1475px;top:996px;width:100px;height:4px;overflow:hidden"><div class="t n" style="left:0;top:-3px">4 其他</div></div>

<div class="t n" style="left:1436px;top:1017px">第 41 页，共 855 页</div>
<div class="t n" style="left:1566px;top:1017px">68006 个字</div>
<div class="t n" style="left:1680px;top:1017px">简体中文(中国大陆)</div>
<div class="t n" style="left:1802px;top:1017px">修订: 关闭</div>
<div class="t n" style="left:1895px;top:1017px">辅助功能: 调查</div>
<div class="t n" style="left:3304px;top:1018px">90%</div>

<!-- TABLE 1 -->
<div class="b" style="left:1923px;top:187px;width:500px;height:4px;overflow:hidden"><div class="a sb" style="left:0;top:-12px;font-weight:bold;font-size:13px">2.8.2    施工作业过程中存在风险的初步评估</div></div>
<div class="a c" style="left:1947px;top:201px">序</div><div class="a c" style="left:1947px;top:225px">号<i>↵</i></div>
<div class="a c" style="left:1990px;top:201px">危险与</div><div class="a c" style="left:1990px;top:225px">危害<i>↵</i></div>
<div class="a c" style="left:2053px;top:213px">过程<i>↵</i></div>
<div class="a c" style="left:2132px;top:213px">原因<i>↵</i></div>
<div class="a c" style="left:2291px;top:213px">防范措施<i>↵</i></div>
<div class="a c" style="left:2440px;top:213px">涉及岗位<i>↵</i></div>
<div class="a c" style="left:1947px;top:349px">1<i>↵</i></div>
<div class="a c" style="left:1990px;top:336px">火灾、</div><div class="a c" style="left:1990px;top:359px">爆炸<i>↵</i></div>
<div class="a c" style="left:2053px;top:348px">全过程<i>↵</i></div>
<div class="a c" style="left:2132px;top:335px">自然、操作不</div><div class="a c" style="left:2132px;top:359px">当<i>↵</i></div>
<div class="a c" style="left:2440px;top:335px">操作工<i>↵</i></div><div class="a c" style="left:2440px;top:360px">电工<i>↵</i></div>
<div class="a j" style="left:2185px;top:250px;width:206px">1、动火区域应严格履行 HSE 管理程序</div>
<div class="a" style="left:2185px;top:274px">文件，申请动火票。<i>↵</i></div>
<div class="a j" style="left:2185px;top:299px;width:206px">2、仓库、旧材料堆放场所及其它指定</div>
<div class="a j" style="left:2185px;top:323px;width:212px">严禁明火的场所严禁吸烟、如需动火应</div>
<div class="a" style="left:2185px;top:348px">设专人看护。<i>↵</i></div>
<div class="a j" style="left:2185px;top:373px;width:206px">3、营地内电线要规划整齐，严禁乱拉</div>
<div class="a" style="left:2185px;top:397px">乱接。<i>↵</i></div>
<div class="a j" style="left:2185px;top:422px;width:206px">4、员工必须严格执行“人走灯灭、人</div>
<div class="a" style="left:2185px;top:446px">走火灭”规定。<i>↵</i></div>
<div class="a c" style="left:1947px;top:520px">2<i>↵</i></div>
<div class="a c" style="left:1990px;top:508px">机械伤</div><div class="a c" style="left:1990px;top:532px">害<i>↵</i></div>
<div class="a c" style="left:2053px;top:508px">施工准备<i>↵</i></div><div class="a c" style="left:2053px;top:532px">及施工种<i>↵</i></div>
<div class="a c" style="left:2132px;top:495px">施工前未检查</div><div class="a c" style="left:2132px;top:519px">设备防护措施</div><div class="a c" style="left:2132px;top:544px">是否完好<i>↵</i></div>
<div class="a c" style="left:2440px;top:520px">操作工<i>↵</i></div>
<div class="a j" style="left:2185px;top:471px;width:206px">1、施工前，检查设备的防护设备完好</div>
<div class="a" style="left:2185px;top:495px">性；<i>↵</i></div>
<div class="a" style="left:2185px;top:520px">2、劳保穿戴齐全有效；<i>↵</i></div>
<div class="a" style="left:2185px;top:544px">3、严格遵守操作规程；<i>↵</i></div>
<div class="a" style="left:2185px;top:569px">4、员工配合密切。<i>↵</i></div>
<div class="a c" style="left:1947px;top:631px">3<i>↵</i></div>
<div class="a c" style="left:1990px;top:631px">触电<i>↵</i></div>
<div class="a c" style="left:2053px;top:618px">施工准备<i>↵</i></div><div class="a c" style="left:2053px;top:642px">及施工种<i>↵</i></div>
<div class="a c" style="left:2132px;top:593px">员工违章操</div><div class="a c" style="left:2132px;top:618px">作，设备部件</div><div class="a c" style="left:2132px;top:642px">漏电，接地不</div><div class="a c" style="left:2132px;top:666px">良<i>↵</i></div>
<div class="a c" style="left:2440px;top:618px">操作工<i>↵</i></div><div class="a c" style="left:2440px;top:642px">电工<i>↵</i></div>
<div class="a" style="left:2185px;top:605px">1、严格遵守操作规程；<i>↵</i></div>
<div class="a" style="left:2185px;top:631px">2、劳保穿戴齐全有效；<i>↵</i></div>
<div class="a" style="left:2185px;top:654px">3、严格遵守操作规程<i>↵</i></div>
<div class="a c" style="left:1947px;top:728px">4<i>↵</i></div>
<div class="a c" style="left:1990px;top:716px">硫化氢</div><div class="a c" style="left:1990px;top:740px">中毒<i>↵</i></div>
<div class="a c" style="left:2053px;top:728px">施工中<i>↵</i></div>
<div class="a c" style="left:2132px;top:691px">井内硫化氢泄</div><div class="a c" style="left:2132px;top:716px">露溢出、报警</div><div class="a c" style="left:2132px;top:740px">失效、未配备</div><div class="a c" style="left:2132px;top:764px">防护器材<i>↵</i></div>
<div class="a c" style="left:2440px;top:728px">操作工<i>↵</i></div>
<div class="a" style="left:2185px;top:704px">1、随时用报警检测仪检测；<i>↵</i></div>
<div class="a" style="left:2185px;top:728px">2、劳动防护用品穿戴齐全有效；<i>↵</i></div>
<div class="a" style="left:2185px;top:752px">3、正确使用正压呼吸器。<i>↵</i></div>
<div class="a c" style="left:1947px;top:839px">5<i>↵</i></div>
<div class="a c" style="left:1990px;top:827px">自然灾</div><div class="a c" style="left:1990px;top:851px">害<i>↵</i></div>
<div class="a c" style="left:2053px;top:839px">施工中<i>↵</i></div>
<div class="a c" style="left:2132px;top:839px">地震、洪水<i>↵</i></div>
<div class="a c" style="left:2440px;top:827px">操作工<i>↵</i></div><div class="a c" style="left:2440px;top:851px">电工<i>↵</i></div>
<div class="a" style="left:2185px;top:791px">1、接到警报通知后进入应急状态；<i>↵</i></div>
<div class="a j" style="left:2185px;top:815px;width:200px">2、若情势严重，听从应急中心指挥，</div>
<div class="a" style="left:2185px;top:839px">停止工作，撤出现场；<i>↵</i></div>
<div class="a j" style="left:2185px;top:864px;width:206px">3、进行各种灾害应急常识的培训和演</div>
<div class="a" style="left:2185px;top:887px">习。<i>↵</i></div>
<div class="a c" style="left:1947px;top:950px">6<i>↵</i></div>
<div class="a c" style="left:1990px;top:936px">高空坠</div><div class="a c" style="left:1990px;top:961px">落<i>↵</i></div>
<div class="a c" style="left:2053px;top:950px">全过程<i>↵</i></div>
<div class="a c" style="left:2132px;top:924px">施工前未检查</div><div class="a c" style="left:2132px;top:949px">设备防护措施</div><div class="a c" style="left:2132px;top:974px">是否完好<i>↵</i></div>
<div class="a c" style="left:2440px;top:936px">操作工<i>↵</i></div><div class="a c" style="left:2440px;top:961px">电工<i>↵</i></div>
<div class="a j" style="left:2185px;top:913px;width:206px">1、施工前，检查设备的防护设备完好</div>
<div class="a" style="left:2185px;top:936px">性；<i>↵</i></div>
<div class="a" style="left:2185px;top:961px">2、劳保穿戴齐全有效；<i>↵</i></div>
<div class="a" style="left:2185px;top:986px">3、严格遵守操作规程；<i>↵</i></div>
<i style="left:2476px;top:202px">↵</i><i style="left:2476px;top:250px">↵</i><i style="left:2476px;top:472px">↵</i><i style="left:2476px;top:593px">↵</i><i style="left:2476px;top:692px">↵</i><i style="left:2476px;top:791px">↵</i><i style="left:2476px;top:913px">↵</i>

<!-- TABLE 2 -->
<div class="b" style="left:2910px;top:187px;width:200px;height:6px;overflow:hidden"><div class="a" style="left:0;top:-10px">4、员工配合密切。<i>↵</i></div></div>
<div class="a c" style="left:2673px;top:239px">7<i>↵</i></div>
<div class="a c" style="left:2716px;top:226px">油料、</div><div class="a c" style="left:2716px;top:250px">燃料<i>↵</i></div>
<div class="a c" style="left:2779px;top:239px">全过程<i>↵</i></div>
<div class="a c" style="left:2859px;top:239px">施工过程中<i>↵</i></div>
<div class="a c" style="left:3167px;top:226px">操作工<i>↵</i></div><div class="a c" style="left:3167px;top:251px">电工<i>↵</i></div>
<div class="a" style="left:2910px;top:202px">1、施工前，检查设备的完好性；<i>↵</i></div>
<div class="a" style="left:2910px;top:226px">2、劳保穿戴齐全有效；<i>↵</i></div>
<div class="a" style="left:2910px;top:251px">3、严格遵守操作规程；<i>↵</i></div>
<div class="a" style="left:2910px;top:275px">4、员工配合密切。<i>↵</i></div>
<div class="a c" style="left:2673px;top:349px">8<i>↵</i></div>
<div class="a c" style="left:2716px;top:324px">放射性</div><div class="a c" style="left:2716px;top:348px">物质危</div><div class="a c" style="left:2716px;top:373px">害<i>↵</i></div>
<div class="a c" style="left:2779px;top:337px">施工准备<i>↵</i></div><div class="a c" style="left:2779px;top:361px">及施工种<i>↵</i></div>
<div class="a c" style="left:2859px;top:324px">施工前未检查</div><div class="a c" style="left:2859px;top:348px">设备防护措施</div><div class="a c" style="left:2859px;top:373px">是否完好<i>↵</i></div>
<div class="a c" style="left:3167px;top:349px">操作工<i>↵</i></div>
<div class="a j" style="left:2910px;top:300px;width:207px">1、施工前，检查设备的防护设备完好</div>
<div class="a" style="left:2910px;top:324px">性；<i>↵</i></div>
<div class="a" style="left:2910px;top:349px">2、劳保穿戴齐全有效；<i>↵</i></div>
<div class="a" style="left:2910px;top:373px">3、严格遵守操作规程；<i>↵</i></div>
<div class="a" style="left:2910px;top:398px">4、员工配合密切。<i>↵</i></div>
<div class="a c" style="left:2673px;top:472px">9<i>↵</i></div>
<div class="a c" style="left:2716px;top:460px">物体打</div><div class="a c" style="left:2716px;top:484px">击<i>↵</i></div>
<div class="a c" style="left:2779px;top:472px">施工中<i>↵</i></div>
<div class="a c" style="left:2859px;top:460px">施工过程中.</div><div class="a c" style="left:2859px;top:484px">员工违章操作<i>↵</i></div>
<div class="a c" style="left:3167px;top:472px">操作工<i>↵</i></div>
<div class="a j" style="left:2910px;top:423px;width:207px">1.拨打“120”急救电话，详细报告发</div>
<div class="a" style="left:2910px;top:447px">生地址、人员受伤的情况<i>↵</i></div>
<div class="a j" style="left:2910px;top:472px;width:214px">2.根据事故现场的整体情况、位置和伤</div>
<div class="a j" style="left:2910px;top:496px;width:214px">者的伤情、部位，在排除人为加重伤者</div>
<div class="a" style="left:2910px;top:521px">的情况下，立即组织人员进行抢救。<i>↵</i></div>
<div class="a c" style="left:2673px;top:569px">10<i>↵</i></div>
<div class="a c" style="left:2716px;top:557px">中毒.窒</div><div class="a c" style="left:2716px;top:581px">息<i>↵</i></div>
<div class="a c" style="left:2779px;top:569px">施工中<i>↵</i></div>
<div class="a c" style="left:2859px;top:545px">施工过程中、</div><div class="a c" style="left:2859px;top:569px">报警失效、未</div><div class="a c" style="left:2859px;top:594px">配备防护器材<i>↵</i></div>
<div class="a c" style="left:3167px;top:569px">操作工<i>↵</i></div>
<div class="a" style="left:2910px;top:545px">1、随时用报警检测仪检测；<i>↵</i></div>
<div class="a" style="left:2910px;top:569px">2、劳动防护用品穿戴齐全有效；<i>↵</i></div>
<div class="a" style="left:2910px;top:594px">3、正确使用正压呼吸器。<i>↵</i></div>
<div class="a c" style="left:2673px;top:717px">11<i>↵</i></div>
<div class="a c" style="left:2716px;top:704px">车辆伤</div><div class="a c" style="left:2716px;top:728px">害<i>↵</i></div>
<div class="a c" style="left:2779px;top:717px">施工中<i>↵</i></div>
<div class="a c" style="left:2859px;top:717px">施工过程中<i>↵</i></div>
<div class="a c" style="left:3167px;top:717px">操作工<i>↵</i></div>
<div class="a j" style="left:2910px;top:619px;width:200px">（1）遇紧急情况分轻、重、缓、急，</div>
<div class="a j" style="left:2910px;top:643px;width:214px">以抢救人员（伤员）为主，保护事故现</div>
<div class="a" style="left:2910px;top:668px">场，最大限度地降低损失。<i>↵</i></div>
<div class="a j" style="left:2910px;top:692px;width:203px">（2）情况紧急时拨打 110 或 119，有</div>
<div class="a" style="left:2910px;top:717px">人员受伤严重过的拨打 120。<i>↵</i></div>
<div class="a j" style="left:2910px;top:741px;width:207px">（3）事故车辆驾驶员负责报警、向领</div>
<div class="a j" style="left:2910px;top:765px;width:214px">导汇报情况，向就近加油站求助，协助</div>
<div class="a j" style="left:2910px;top:790px;width:214px">本车押运员共同先期抢救伤员及车辆并</div>
<div class="a" style="left:2910px;top:814px">扑救初期火灾，保护现场。<i>↵</i></div>
<div class="a c" style="left:2673px;top:876px">12<i>↵</i></div>
<div class="a c" style="left:2716px;top:863px">起重伤</div><div class="a c" style="left:2716px;top:888px">害<i>↵</i></div>
<div class="a c" style="left:2779px;top:876px">施工中<i>↵</i></div>
<div class="a c" style="left:2859px;top:851px">施工前未检查</div><div class="a c" style="left:2859px;top:876px">设备防护措施</div><div class="a c" style="left:2859px;top:900px">是否完好<i>↵</i></div>
<div class="a c" style="left:3167px;top:876px">操作工<i>↵</i></div>
<div class="a" style="left:2910px;top:839px">1、施工前，检查设备的完好性；<i>↵</i></div>
<div class="a" style="left:2910px;top:863px">2、劳保穿戴齐全有效；<i>↵</i></div>
<div class="a" style="left:2910px;top:888px">3、严格遵守操作规程；<i>↵</i></div>
<div class="a" style="left:2910px;top:912px">4、员工配合密切。<i>↵</i></div>
<i style="left:3202px;top:178px">↵</i><i style="left:3202px;top:202px">↵</i><i style="left:3202px;top:300px">↵</i><i style="left:3202px;top:423px">↵</i><i style="left:3202px;top:545px">↵</i><i style="left:3202px;top:619px">↵</i><i style="left:3202px;top:839px">↵</i>
<i style="left:2657px;top:937px">↵</i><i style="left:2657px;top:961px">↵</i><i style="left:2657px;top:986px">↵</i>

<div class="t" style="left:3055px;top:943px;font-size:20px;line-height:24px;height:24px;color:#c4c4c4">激活 Windows</div>
<div class="t" style="left:3055px;top:969px;font-size:13px;color:#c4c4c4">转到“设置”以激活 Windows。</div>
</body></html>
